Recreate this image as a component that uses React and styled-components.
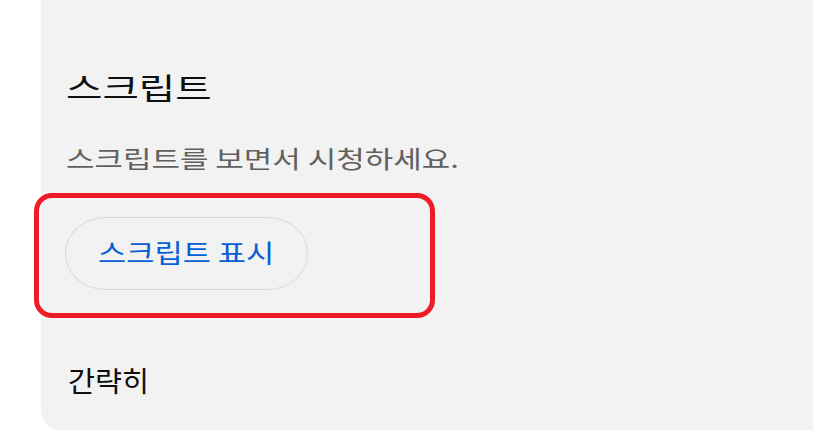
import React from 'react';
import styled, { createGlobalStyle } from 'styled-components';

const GlobalStyle = createGlobalStyle`
  html, body {
    margin: 0;
    padding: 0;
    background: #ffffff;
  }
  body {
    font-family: "Noto Sans CJK KR", "Noto Sans", sans-serif;
  }
`;

const Page = styled.div`
  display: flex;
  padding-left: 41px;
  height: 445px;
  box-sizing: border-box;
`;

const Panel = styled.section`
  flex: 1;
  display: flex;
  flex-direction: column;
  align-items: flex-start;
  background: #f2f2f2;
  border-radius: 0 0 0 20px;
  height: 430px;
  box-sizing: border-box;
  padding: 66px 0 0 25px;
`;

// the screenshot's text is a little wider than the font draws it
const Stretch = styled.span`
  display: inline-block;
  white-space: nowrap;
  transform: scaleX(${p => p.$sx || 1});
  transform-origin: left center;
`;

const Title = styled.h2`
  margin: 0;
  font-size: 30px;
  line-height: 40px;
  font-weight: 400;
  color: #0f0f0f;
`;

const Description = styled.p`
  margin: 36px 0 0;
  font-size: 24px;
  line-height: 32px;
  color: #606060;
`;

const Highlight = styled.div`
  margin: 19px 0 0 -32px;
  width: 401px;
  box-sizing: border-box;
  border: 5px solid #ed1c24;
  border-radius: 18px;
  padding: 19px 0 23px 26px;
`;

const TranscriptButton = styled.button`
  display: flex;
  align-items: center;
  width: 243px;
  height: 73px;
  box-sizing: border-box;
  padding: 0 0 4px 32px;
  background: #f2f2f2;
  border: 1px solid #dadada;
  border-radius: 40px / 36px;
  font-family: inherit;
  font-size: 26px;
  line-height: 32px;
  color: #065fd4;
  cursor: pointer;
`;

const Collapse = styled.div`
  margin: 44px 0 0 2px;
  font-size: 28px;
  line-height: 36px;
  color: #0f0f0f;
`;

export default function App() {
  return (
    <>
      <GlobalStyle />
      <Page>
        <Panel>
          <Title>
            <Stretch $sx={1.32}>스크립트</Stretch>
          </Title>
          <Description>
            <Stretch $sx={1.29}>스크립트를 보면서 시청하세요.</Stretch>
          </Description>
          <Highlight>
            <TranscriptButton>
              <Stretch $sx={1.18}>스크립트 표시</Stretch>
            </TranscriptButton>
          </Highlight>
          <Collapse>
            <Stretch $sx={1.05}>간략히</Stretch>
          </Collapse>
        </Panel>
      </Page>
    </>
  );
}
